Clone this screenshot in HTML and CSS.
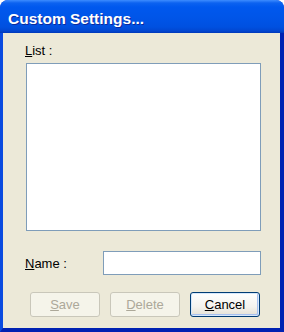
FILE: index.html
```html
<!DOCTYPE html>
<html lang="en">

<head>
    <meta charset="UTF-8">
    <title>Custom Settings</title>
    <link rel="stylesheet" href="styles.css">
</head>

<body>
    <div class="window">
        <div class="titlebar">Custom Settings...</div>
        <div class="frame">
            <div class="panel">
                <div class="label list-label"><u>L</u>ist :</div>
                <div class="listbox"></div>
                <div class="name-row">
                    <label class="label" for="nameInput"><u>N</u>ame :</label>
                    <input type="text" id="nameInput" class="textbox">
                </div>
                <div class="buttons">
                    <button class="btn" disabled><u>S</u>ave</button>
                    <button class="btn" disabled><u>D</u>elete</button>
                    <button class="btn default"><u>C</u>ancel</button>
                </div>
            </div>
        </div>
    </div>
</body>

</html>
```

FILE: styles.css
```css
html,
body {
    margin: 0;
    padding: 0;
}

body {
    width: 284px;
    height: 332px;
    overflow: hidden;
    font-family: "Liberation Sans", Arial, sans-serif;
    font-size: 13px;
    color: #000;
    background: #fff;
}

.window {
    height: 332px;
    display: flex;
    flex-direction: column;
    border-radius: 8px 8px 0 0;
    overflow: hidden;
    background: #0a3fd4;
}

.titlebar {
    height: 33px;
    flex: none;
    box-sizing: border-box;
    padding: 4px 0 0 8px;
    display: flex;
    align-items: center;
    color: #fff;
    font-weight: bold;
    font-size: 15.5px;
    text-shadow: 1px 1px 0 #0d2a9c;
    background: linear-gradient(#3d8cff 0px, #0c62f0 3px, #0058ee 7px, #0055e8 18px, #0050e0 27px, #0246d0 31px, #0038b8 33px);
}

.frame {
    flex: 1;
    display: flex;
    border-left: 3px solid #0a4be0;
    border-right: 4px solid #0021b2;
    border-bottom: 4px solid #0021b2;
}

.panel {
    flex: 1;
    background: #ece9d8;
    padding: 10px 19px 0 23px;
}

.label {
    line-height: 15px;
    margin-left: -1px;
    display: inline-block;
}

.list-label {
    display: block;
}

.listbox {
    margin-top: 5px;
    height: 168px;
    box-sizing: border-box;
    border: 1px solid #7f9db9;
    background: #fff;
}

.name-row {
    margin-top: 20px;
    display: flex;
    align-items: center;
    justify-content: space-between;
}

.textbox {
    width: 158px;
    height: 24px;
    box-sizing: border-box;
    border: 1px solid #7f9db9;
    background: #fff;
    margin: 0;
    padding: 0 3px;
    font: inherit;
}

.buttons {
    margin-top: 17px;
    margin-right: 1px;
    display: flex;
    justify-content: flex-end;
    gap: 10px;
}

.btn {
    width: 70px;
    height: 25px;
    box-sizing: border-box;
    margin: 0;
    padding: 0;
    font: inherit;
    border-radius: 3px;
    border: 1px solid #003c74;
    background: linear-gradient(#ffffff, #f4f3ee 60%, #e3e0d3);
    color: #000;
}

.btn:disabled {
    border-color: #c9c7ba;
    background: #f5f4ea;
    color: #aca899;
}

.btn.default {
    box-shadow: inset 0 0 0 1px #d6e8fb, inset -1px -1px 0 1px #a6c0ef;
}
```
